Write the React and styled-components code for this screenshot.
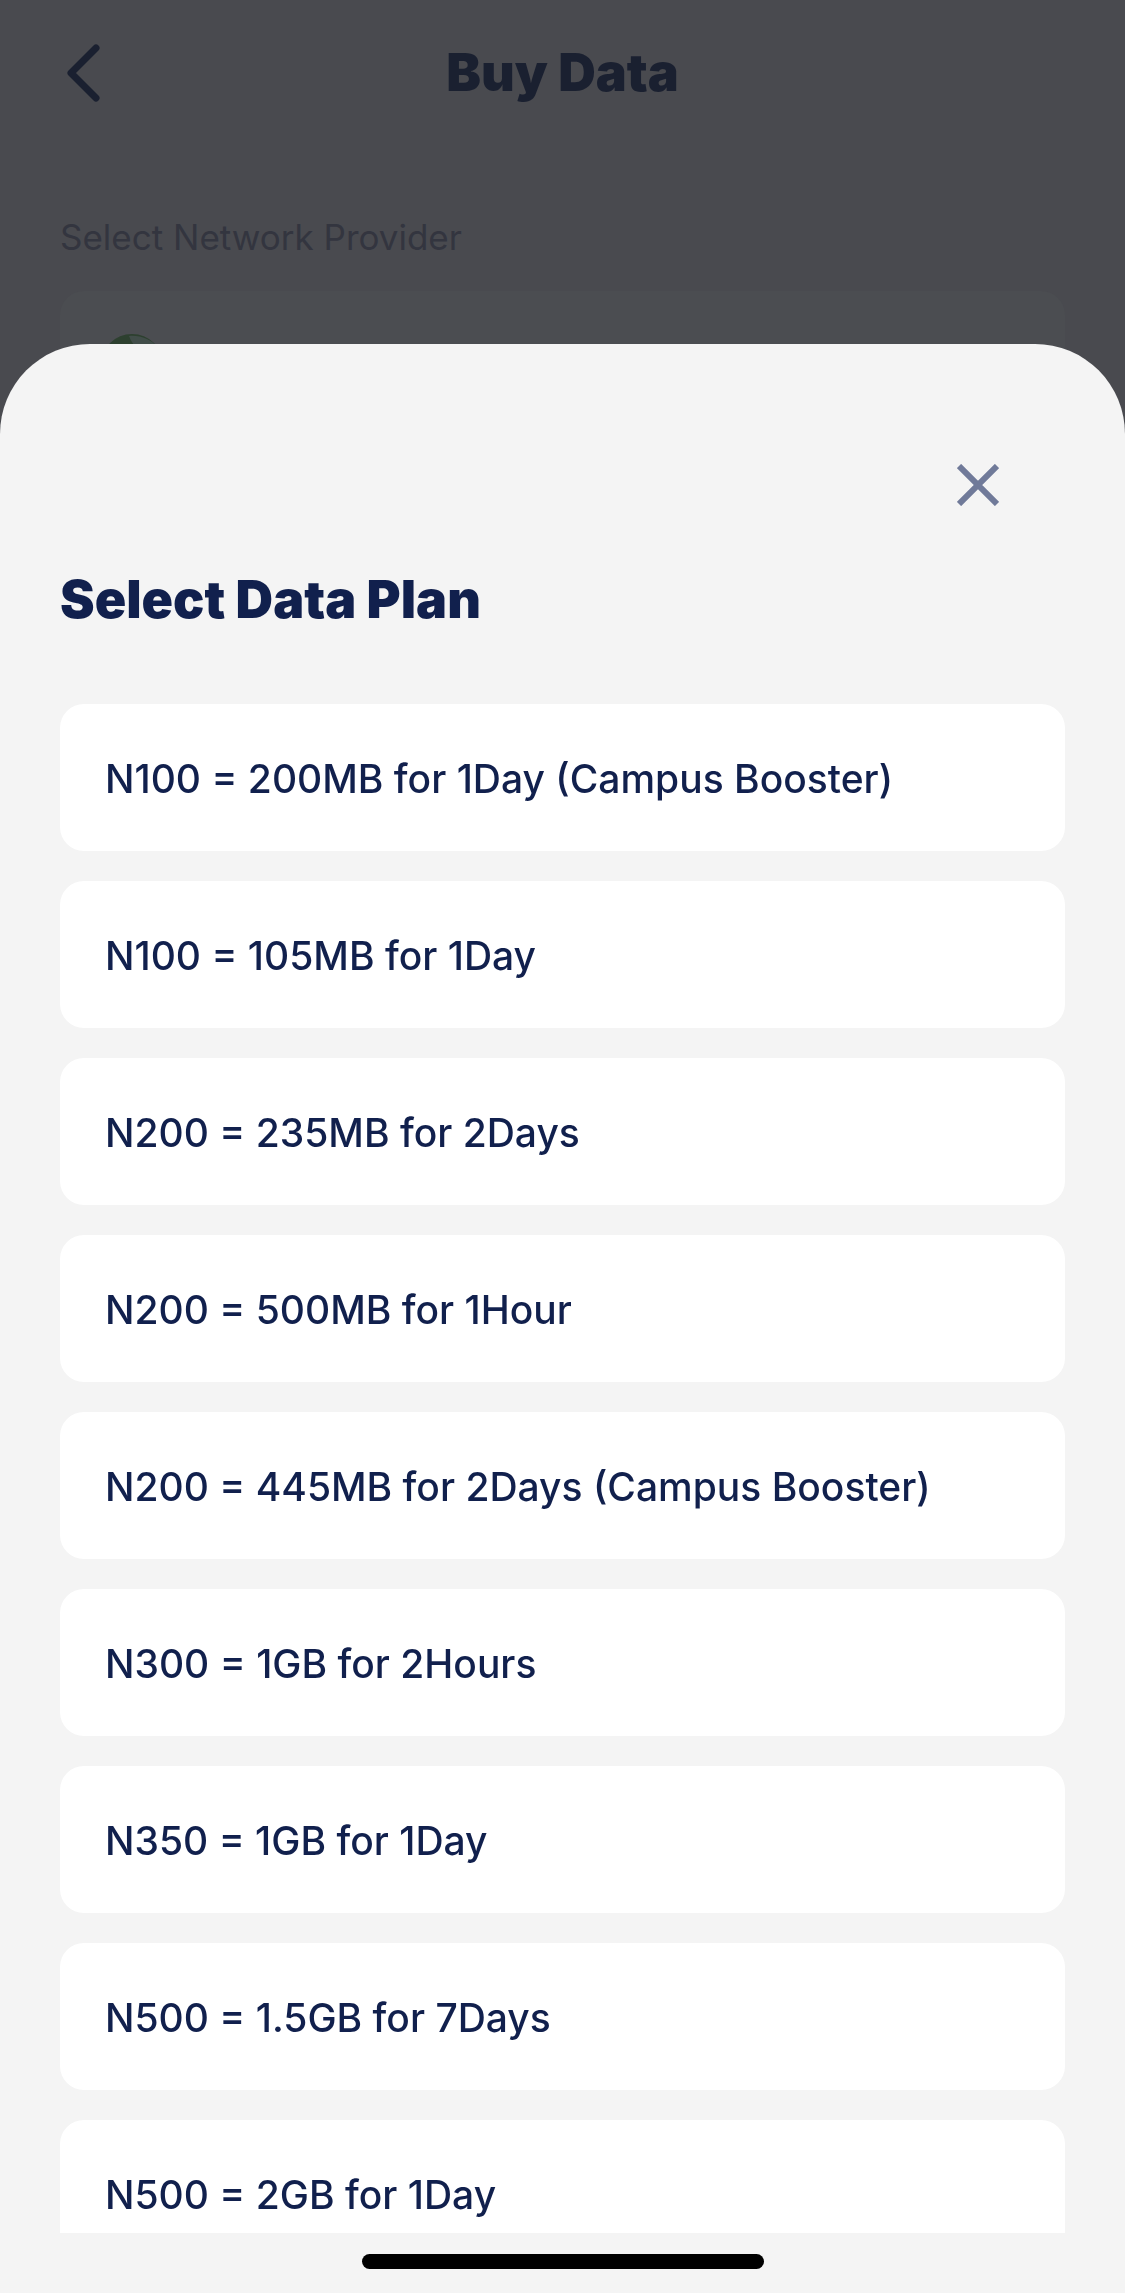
import React, { useState } from "react";
import styled, { createGlobalStyle } from "styled-components";

const plans = [
  "N100 = 200MB for 1Day (Campus Booster)",
  "N100 = 105MB for 1Day",
  "N200 = 235MB for 2Days",
  "N200 = 500MB for 1Hour",
  "N200 = 445MB for 2Days (Campus Booster)",
  "N300 = 1GB for 2Hours",
  "N350 = 1GB for 1Day",
  "N500 = 1.5GB for 7Days",
  "N500 = 2GB for 1Day",
];

const App = () => {
  const [isOpen, setIsOpen] = useState(true);
  const [selected, setSelected] = useState(null);

  const choosePlan = (plan) => {
    setSelected(plan);
    setIsOpen(false);
  };

  return (
    <Screen>
      <GlobalStyle />
      <Header>
        <BackButton aria-label='Back'>
          <svg width='36' height='60' viewBox='0 0 36 60' fill='none'>
            <path
              d='M32 5 7 30l25 25'
              stroke='currentColor'
              strokeWidth='7'
              strokeLinecap='round'
              strokeLinejoin='round'
            />
          </svg>
        </BackButton>
        <PageTitle>Buy Data</PageTitle>
      </Header>
      <Field>
        <FieldLabel id='provider'>Select Network Provider</FieldLabel>
        <ProviderButton aria-labelledby='provider' onClick={() => setIsOpen(true)}>
          <svg width='62' height='62' viewBox='0 0 62 62'>
            <circle cx='31' cy='31' r='31' fill='#2d402f' />
            <path d='M28 2c11-1 22 3 28 11l-19 3C34 12 30 8 28 2z' fill='#414d49' />
          </svg>
        </ProviderButton>
      </Field>
      {isOpen && (
        <Sheet role='dialog' aria-labelledby='sheet-title'>
          <CloseButton aria-label='Close' onClick={() => setIsOpen(false)}>
            <svg width='42' height='42' viewBox='0 0 42 42'>
              <path d='M2 2l38 38M40 2L2 40' stroke='currentColor' strokeWidth='6' />
            </svg>
          </CloseButton>
          <SheetTitle id='sheet-title'>Select Data Plan</SheetTitle>
          <PlanList>
            {plans.map((plan) => (
              <li key={plan}>
                <PlanButton
                  aria-pressed={selected === plan}
                  onClick={() => choosePlan(plan)}
                >
                  {plan}
                </PlanButton>
              </li>
            ))}
          </PlanList>
          <SheetFooter>
            <HomeBar />
          </SheetFooter>
        </Sheet>
      )}
    </Screen>
  );
};

const GlobalStyle = createGlobalStyle`
  * {
    box-sizing: border-box;
  }
  body {
    margin: 0;
    background-color: #494a4f;
    font-family: Inter, "Liberation Sans", sans-serif;
  }
  button {
    padding: 0;
    border: 0;
    background-color: transparent;
    font-family: inherit;
    cursor: pointer;
  }
  svg {
    display: block;
  }
`;

const Screen = styled.main`
  min-height: 100vh;
  background-color: #494a4f;
`;

const Header = styled.header`
  display: grid;
  grid-template-columns: 60px 1fr 60px;
  align-items: center;
  padding: 42px 60px 0;
`;

const BackButton = styled.button`
  padding-left: 4px;
  color: #1a2030;
`;

const PageTitle = styled.h1`
  margin: 0;
  color: #1a2030;
  font-size: 52px;
  font-weight: 900;
  line-height: 62px;
  text-align: center;
`;

const Field = styled.section`
  display: flex;
  flex-direction: column;
  gap: 32px;
  padding: 111px 60px 0;
`;

const FieldLabel = styled.span`
  color: #33353f;
  font-size: 35px;
  line-height: 44px;
`;

const ProviderButton = styled.button`
  padding: 43px 41px;
  border-radius: 24px;
  background-color: #4b4d51;
`;

const Sheet = styled.section`
  position: fixed;
  inset: 15vh 0 0;
  display: flex;
  flex-direction: column;
  border-radius: 90px 90px 0 0;
  background-color: #f4f4f4;
`;

const CloseButton = styled.button`
  align-self: flex-end;
  margin: 120px 126px 0 0;
  color: #707a99;
`;

const SheetTitle = styled.h2`
  margin: 63px 60px 73px;
  color: #11204d;
  font-size: 52px;
  font-weight: 900;
  line-height: 62px;
`;

const PlanList = styled.ul`
  flex: 1;
  min-height: 0;
  display: flex;
  flex-direction: column;
  gap: 30px;
  margin: 0;
  padding: 0 60px;
  list-style: none;
  overflow-y: auto;
  scrollbar-width: none;
`;

const PlanButton = styled.button`
  width: 100%;
  padding: 49px 45px 46px;
  border-radius: 24px;
  background-color: #fff;
  color: #11204d;
  font-size: 39px;
  font-weight: 500;
  line-height: 52px;
  text-align: left;
`;

const SheetFooter = styled.footer`
  display: flex;
  justify-content: center;
  padding: 21px 0 24px;
`;

const HomeBar = styled.div`
  width: 402px;
  height: 15px;
  border-radius: 8px;
  background-color: #000;
`;

export default App;
